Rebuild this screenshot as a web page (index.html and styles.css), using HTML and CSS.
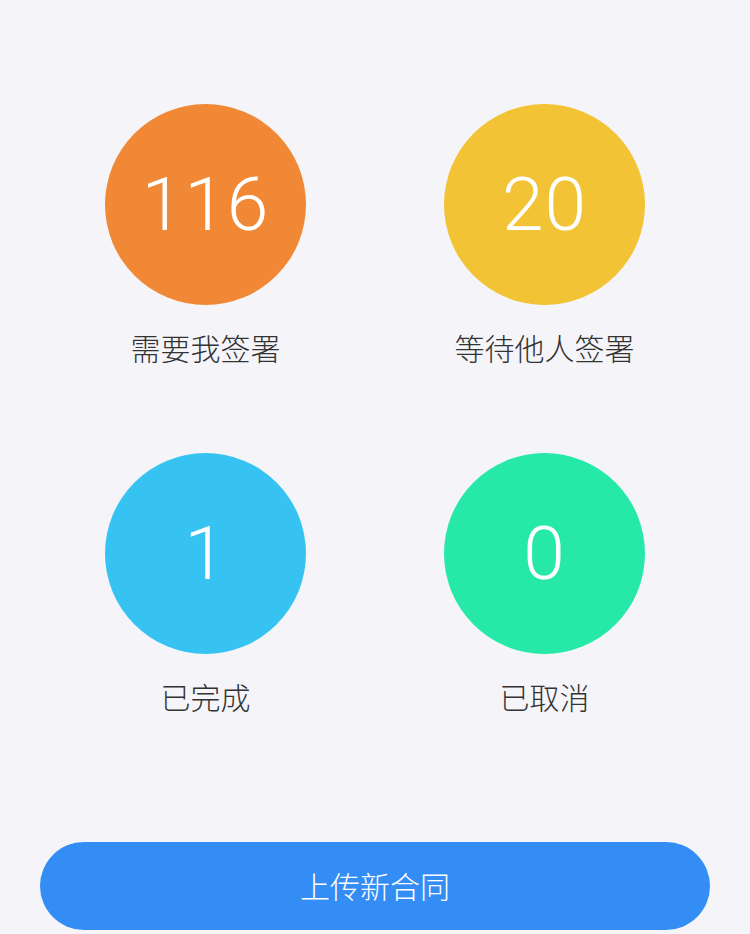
FILE: index.html
```html
<!DOCTYPE html>
<html lang="zh">
<head>
<meta charset="utf-8">
<link rel="stylesheet" href="styles.css">
</head>
<body>
<main class="page">
  <section class="grid">
    <div class="stat">
      <div class="circle orange">116</div>
      <div class="label">需要我签署</div>
    </div>
    <div class="stat">
      <div class="circle yellow">20</div>
      <div class="label">等待他人签署</div>
    </div>
    <div class="stat">
      <div class="circle blue">1</div>
      <div class="label">已完成</div>
    </div>
    <div class="stat">
      <div class="circle green">0</div>
      <div class="label">已取消</div>
    </div>
  </section>
  <div class="actions">
    <button class="upload">上传新合同</button>
  </div>
</main>
</body>
</html>
```
FILE: styles.css
```css
html, body {
  margin: 0;
  padding: 0;
  background: #f5f5f9;
}
body {
  font-family: "Noto Sans CJK SC", "Noto Sans", sans-serif;
  width: 750px;
  height: 934px;
  overflow: hidden;
}
.page {
  display: flex;
  flex-direction: column;
  padding-top: 104px;
}
.grid {
  display: grid;
  grid-template-columns: 339px 339px;
  row-gap: 86px;
  padding: 0 36px;
}
.stat {
  display: flex;
  flex-direction: column;
  align-items: center;
}
.circle {
  width: 201px;
  height: 201px;
  border-radius: 50%;
  display: flex;
  align-items: center;
  justify-content: center;
  color: #fff;
  font-family: "Roboto", "Liberation Sans", sans-serif;
  font-weight: 300;
  font-size: 75px;
  letter-spacing: 1px;
  line-height: 1;
}
.orange { background: #f18836; }
.yellow { background: #f2c335; }
.blue { background: #37c3f2; }
.green { background: #27e9a7; }
.label {
  margin-top: 22px;
  font-size: 30px;
  font-weight: 300;
  line-height: 40px;
  color: #333;
}
.actions {
  padding: 126px 40px 0;
}
.upload {
  display: block;
  width: 670px;
  height: 88px;
  border: none;
  border-radius: 44px;
  background: #338df5;
  color: #fff;
  font-family: "Noto Sans CJK SC", "Noto Sans", sans-serif;
  font-size: 30px;
  font-weight: 300;
  padding: 0 0 3px;
}
```
